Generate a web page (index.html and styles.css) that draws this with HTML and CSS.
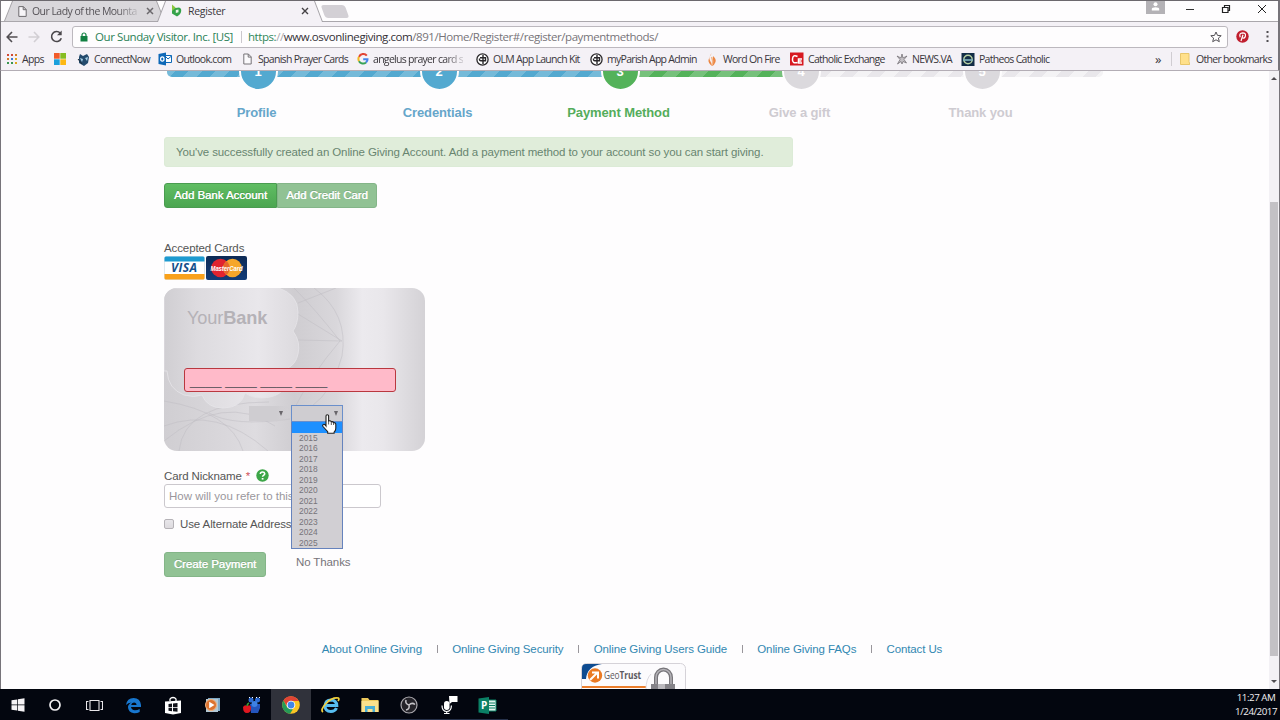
FILE: index.html
```html
<!DOCTYPE html>
<html lang="en">
<head>
    <meta charset="UTF-8">
    <meta name="viewport" content="width=device-width, initial-scale=1.0">
    <title>Register</title>
    <link rel="stylesheet" href="styles.css">
</head>
<body>
    <div class="window">
        <div class="tabstrip">
            <div class="tab tab-back">
                <svg width="9" height="11" viewBox="0 0 9 11"><path d="M.8.6h4.6l2.8 2.9v6.9H.8zM5.2.6v3.1h3" fill="#f7f5f8" stroke="#6d6a6e"/></svg>
                <span class="tab-title faded">Our Lady of the Mounta</span>
                <svg class="tab-close" width="8" height="8" viewBox="0 0 8 8"><path d="M1 1l6 6M7 1L1 7" stroke="#6b686c" stroke-width="1.5"/></svg>
            </div>
            <div class="tab tab-front">
                <svg width="11" height="13" viewBox="0 0 11 13"><path d="M1 .5l3.500 3v5L1 9z" fill="#8ac63f"/><path d="M1 7l3.500-3 3.500-.5q2.500.5 2.200 3.500Q10 10 6 12.500L1 9.500z" fill="#35a24a"/><path d="M4.800 6l2.700-.5v2.700l-2.700.8z" fill="#eaf6e6"/></svg>
                <span class="tab-title">Register</span>
                <svg class="tab-close" width="8" height="8" viewBox="0 0 8 8"><path d="M1 1l6 6M7 1L1 7" stroke="#444145" stroke-width="1.4"/></svg>
            </div>
            <div class="tab-new"></div>
            <div class="window-buttons">
                <div class="user-badge"><svg width="9" height="9" viewBox="0 0 9 9"><circle cx="4.500" cy="2.200" r="2" fill="#fff"/><path d="M.8 8.500V7q0-1.800 3.700-1.800T8.200 7v1.500z" fill="#fff"/></svg></div>
                <svg width="10" height="10" viewBox="0 0 10 10"><path d="M1 5.500h8" stroke="#333"/></svg>
                <svg width="10" height="10" viewBox="0 0 10 10"><path d="M1.500 3.500h5.500v5H1.500zM3.500 3V1.500h5v5H7.500" fill="none" stroke="#222" stroke-width="1.200"/></svg>
                <svg width="10" height="10" viewBox="0 0 10 10"><path d="M1 1l8 8M9 1L1 9" stroke="#222"/></svg>
            </div>
        </div>

        <div class="toolbar">
            <svg width="12" height="12" viewBox="0 0 12 12"><path d="M6 1L1.200 6 6 11M1.200 6H11.500" fill="none" stroke="#514e52" stroke-width="1.600"/></svg>
            <svg width="12" height="12" viewBox="0 0 12 12"><path d="M6 1l4.800 5L6 11M.5 6h10" fill="none" stroke="#d2cfd4" stroke-width="1.600"/></svg>
            <svg width="13" height="13" viewBox="0 0 13 13"><path d="M10.300 3.200A5 5 0 1 0 11.300 8.200" fill="none" stroke="#4b484c" stroke-width="1.600"/><path d="M11.700.6v4.700H7z" fill="#4b484c"/></svg>
            <div class="address-bar">
                <svg width="8" height="10" viewBox="0 0 8 10"><path d="M2 4.500V3a2 2 0 0 1 4 0v1.500" fill="none" stroke="#128042" stroke-width="1.200"/><path d="M.5 4h7v5.500h-7z" fill="#128042"/></svg>
                <span class="site-owner">Our Sunday Visitor. Inc. [US]</span>
                <span class="url"><i>https:</i><b>//</b>www.osvonlinegiving.com<em>/891/Home/Register#/register/paymentmethods/</em></span>
                <svg class="star" width="12" height="12" viewBox="0 0 12 12"><path d="M6 1l1.500 3.400 3.700.3-2.800 2.400.9 3.600L6 8.800l-3.300 1.900.9-3.600L.8 4.700l3.700-.3z" fill="none" stroke="#555257"/></svg>
            </div>
            <svg width="13" height="13" viewBox="0 0 13 13"><circle cx="6.500" cy="6.500" r="6.200" fill="#c01e2e"/><path d="M4.200 7.200Q2.700 3 6.700 2.800q3.300.2 2.700 3.200-.8 2.900-3 1.700M7 4.700L5 11" fill="none" stroke="#fff" stroke-width="1.200"/></svg>
            <svg class="menu-dots" width="3" height="11" viewBox="0 0 3 11"><path d="M.5 0h2v2h-2zM.5 4.500h2v2h-2zM.5 9h2v2h-2z" fill="#514e52"/></svg>
        </div>

        <div class="bookmarks">
            <div class="bookmark"><svg width="12" height="12" viewBox="0 0 12 12"><path d="M1 1h2v2H1zM5 1h2v2H5z" fill="#d14836"/><path d="M9 1h2v2H9zM1 5h2v2H1z" fill="#d37b28"/><path d="M5 5h2v2H5z" fill="#3b78d6"/><path d="M9 5h2v2H9zM9 9h2v2H9z" fill="#e0a51d"/><path d="M1 9h2v2H1zM5 9h2v2H5z" fill="#3a9650"/></svg><span>Apps</span></div>
            <div class="bookmark"><svg width="14" height="14" viewBox="0 0 14 14"><path d="M1 1h5.700v5.700H1z" fill="#f15a29"/><path d="M7.300 1H13v5.700H7.300z" fill="#85bd22"/><path d="M1 7.300h5.700V13H1z" fill="#1ba0dc"/><path d="M7.300 7.300H13V13H7.300z" fill="#fdb813"/></svg></div>
            <div class="bookmark"><svg width="13" height="13" viewBox="0 0 13 13"><path d="M2 4l1-3 3 2 4-2 2 3-1 6-4 3-5-3z" fill="#244b6d"/><path d="M3 5l3 1-1 3zM8 5l3-1-1 4z" fill="#a8d1e8"/><path d="M1 6l4 5" stroke="#182a38"/></svg><span>ConnectNow</span></div>
            <div class="bookmark"><svg width="14" height="14" viewBox="0 0 14 14"><path d="M7 3.500h6.500v7H7z" fill="#fff" stroke="#0d68b7"/><path d="M7 4l3 3 3.500-3" fill="none" stroke="#0d68b7"/><path d="M.5 2L8 .6v12.800L.5 12z" fill="#0d68b7"/><ellipse cx="4.300" cy="7" rx="1.700" ry="2.200" fill="none" stroke="#fff" stroke-width="1.200"/></svg><span>Outlook.com</span></div>
            <div class="bookmark"><svg width="12" height="12" viewBox="0 0 12 12"><path d="M1.800 1h4.600l2.800 2.900V11H1.800zM6.200 1v3.100h3" fill="#fbfafc" stroke="#777478"/></svg><span>Spanish Prayer Cards</span></div>
            <div class="bookmark"><svg width="12" height="12" viewBox="0 0 12 12"><g fill="none" stroke-width="2"><path d="M9.800 2.700A4.600 4.600 0 0 0 2 3.800" stroke="#e14434"/><path d="M2 3.800a4.600 4.600 0 0 0 0 4.400" stroke="#f3b923"/><path d="M2 8.200a4.600 4.600 0 0 0 7 1.300" stroke="#36a256"/><path d="M9 9.500Q10.600 8 10.500 6.200H6.200" stroke="#4483ea"/></g></svg><span class="faded">angelus prayer card s</span></div>
            <div class="bookmark"><svg width="13" height="13" viewBox="0 0 13 13"><circle cx="6.500" cy="6.500" r="5.600" fill="#fff" stroke="#29272a" stroke-width="1.300"/><path d="M7 2v9M4 4.800h6.200M9.500 5v2.700H5Q3 7.500 3.600 5.500" fill="none" stroke="#29272a" stroke-width="1.400"/></svg><span>OLM App Launch Kit</span></div>
            <div class="bookmark"><svg width="13" height="13" viewBox="0 0 13 13"><circle cx="6.500" cy="6.500" r="5.600" fill="#fff" stroke="#29272a" stroke-width="1.300"/><path d="M7 2v9M4 4.800h6.200M9.500 5v2.700H5Q3 7.500 3.600 5.500" fill="none" stroke="#29272a" stroke-width="1.400"/></svg><span>myParish App Admin</span></div>
            <div class="bookmark"><svg width="12" height="13" viewBox="0 0 12 13"><g transform="translate(1)"><path d="M4 0Q0 4 2 7.500T4 13q-4-3-3.500-6T4 0M5 3q3.500 3 2.500 6T4 13q1-4 1-10" fill="#ec8743"/><path d="M3.500 4q2 4 .8 8" fill="none" stroke="#f4b586" stroke-width="1.500"/></g></svg><span>Word On Fire</span></div>
            <div class="bookmark"><svg width="14" height="14" viewBox="0 0 14 14"><path d="M0 .5h13.500v13H0z" fill="#d71920"/><path d="M7.500 4.500Q3 2 2.500 7t5 3.500M12 7H8.500v4H12M8.500 9h3" fill="none" stroke="#fff" stroke-width="1.500"/></svg><span>Catholic Exchange</span></div>
            <div class="bookmark"><svg width="12" height="12" viewBox="0 0 12 12"><path d="M1 3l4 2 1-4 1 4 4-2-3 3.500 2.500 3.500L7 8.500 6 11 5 8.500 1.500 11 4 6.500z" fill="#c5c1c6" stroke="#777378" stroke-width=".8"/></svg><span>NEWS.VA</span></div>
            <div class="bookmark"><svg width="14" height="13" viewBox="0 0 14 13"><path d="M.5 0h13v13H.5z" fill="#132d46"/><circle cx="7" cy="6.500" r="4.200" fill="none" stroke="#b7d0a2" stroke-width="1.400"/><path d="M2 7h10" stroke="#82b5be" stroke-width="1.600"/></svg><span>Patheos Catholic</span></div>
            <div class="bookmark-more">»</div>
            <div class="bookmark bookmark-other"><svg width="10" height="12" viewBox="0 0 10 12"><path d="M.5.5H9v8l.8 3H.5z" fill="#ffe08a" stroke="#e8c66a"/></svg><span>Other bookmarks</span></div>
        </div>

        <div class="viewport">
            <div class="page">
                <div class="steps">
                    <div class="steps-bar"><div class="bar-done"></div><div class="bar-current"></div><div class="bar-todo"></div></div>
                    <div class="step done"><div class="step-number">1</div><div class="step-label">Profile</div></div>
                    <div class="step done"><div class="step-number">2</div><div class="step-label">Credentials</div></div>
                    <div class="step current"><div class="step-number">3</div><div class="step-label">Payment Method</div></div>
                    <div class="step"><div class="step-number">4</div><div class="step-label">Give a gift</div></div>
                    <div class="step"><div class="step-number">5</div><div class="step-label">Thank you</div></div>
                </div>

                <div class="alert">You've successfully created an Online Giving Account. Add a payment method to your account so you can start giving.</div>

                <div class="btn-group">
                    <button class="btn btn-active">Add Bank Account</button><button class="btn">Add Credit Card</button>
                </div>

                <div class="accepted">Accepted Cards</div>
                <div class="card-logos">
                    <svg width="41" height="24" viewBox="0 0 41 24"><rect x=".5" y=".5" width="40" height="23" rx="1.500" fill="#fff" stroke="#dfe8ee"/><path d="M.5 5.500V2Q.5.500 2 .5h37q1.500 0 1.500 1.500v3.500z" fill="#1d9ad0"/><path d="M.5 18h40v4q0 1.500-1.500 1.500H2Q.5 23.500.5 22z" fill="#f9a11b"/><text x="7" y="16" class="visa-text" textLength="26">VISA</text></svg>
                    <svg width="41" height="24" viewBox="0 0 41 24"><defs><linearGradient id="mc" x2="0" y2="1"><stop stop-color="#0d2a55"/><stop offset="1" stop-color="#123c78"/></linearGradient></defs><rect width="41" height="24" rx="2" fill="url(#mc)"/><circle cx="14.500" cy="12" r="9.300" fill="#e0242f"/><circle cx="26.500" cy="12" r="9.300" fill="#f6a62a"/><path d="M20.500 5a9.300 9.300 0 0 1 0 14 9.300 9.300 0 0 1 0-14" fill="#e5672c"/><text x="4.500" y="15" class="mc-text" textLength="32" lengthAdjust="spacingAndGlyphs">MasterCard</text></svg>
                </div>

                <div class="bank-card">
                    <svg class="card-pattern" width="261" height="163" viewBox="0 0 261 163">
                        <defs>
                            <linearGradient id="left"><stop stop-color="#d0ced2"/><stop offset=".25" stop-color="#dddbdf"/><stop offset=".7" stop-color="#e9e7eb"/><stop offset="1" stop-color="#dcdade"/></linearGradient>
                            <linearGradient id="base"><stop stop-color="#d0ced2"/><stop offset=".35" stop-color="#dedce0"/><stop offset=".5" stop-color="#cfcdd1"/><stop offset=".66" stop-color="#d9d7db"/><stop offset=".76" stop-color="#eceaee"/><stop offset=".84" stop-color="#e9e7eb"/><stop offset=".93" stop-color="#dddbdf"/><stop offset="1" stop-color="#d4d2d6"/></linearGradient>
                        </defs>
                        <path d="M0 0h261v163H0z" fill="url(#base)"/>
                        <g fill="none" stroke="#c0bec3" stroke-opacity=".5">
                            <path d="M130 0q22 22 46 53-30 35-48 72M150 0q35 26 28 68-9 35-30 50M134 15l38-15M134 52l44 1-44-27"/>
                            <path d="M0 138q53-20 104 25M0 153q60-49 111-15M0 113q67 11 79 50M15 163q5-49 90-49M45 125q24 14 81 6"/>
                        </g>
                        <path d="M0 0h115q19 7 19 24 0 12-5 19 8 11 5 23-2 10-10 14 3 29-26 30-10 0-17-5-4 15-22 15-16 0-21-13-8 3-18 0Q4 101 3 83H0z" fill="url(#left)" stroke="#e6e4e8" stroke-width=".8"/>
                    </svg>
                    <div class="bank-name">Your<b>Bank</b></div>
                    <div class="card-number">____ ____ ____ ____</div>
                    <div class="card-expiry">
                        <div class="select select-month"><i></i></div>
                        <div class="select select-year">
                            <i></i>
                            <div class="year-menu">
                                <div class="selected"></div>
                                <div>2015</div>
                                <div>2016</div>
                                <div>2017</div>
                                <div>2018</div>
                                <div>2019</div>
                                <div>2020</div>
                                <div>2021</div>
                                <div>2022</div>
                                <div>2023</div>
                                <div>2024</div>
                                <div>2025</div>
                            </div>
                            <svg class="cursor" width="15" height="20" viewBox="0 0 15 20"><path d="M4 11V2q0-1.300 1.300-1.300T6.600 2v5q2-.7 2.700.7 1.800-.4 2.300 1 2-.3 2.200 1.500v4q0 2.500-1.700 4v1H5.700v-1.500L1 12.500q-.9-1.500.5-2Q2.700 10 4 12z" fill="#fff" stroke="#222" stroke-width="1.100"/><path d="M6.600 7v3.500M9.300 8v3M11.600 9v2" stroke="#333" stroke-width=".8"/></svg>
                        </div>
                    </div>
                </div>

                <div class="field-label">Card Nickname <b>*</b>
                    <svg width="13" height="13" viewBox="0 0 13 13"><circle cx="6.500" cy="6.500" r="6.200" fill="#3da648"/><path d="M4.300 5Q4.500 3 6.500 3t2.200 1.700q0 1-1.200 1.700-.9.500-.9 1.400" fill="none" stroke="#fff" stroke-width="1.600"/><path d="M5.700 9h1.800v1.600H5.700z" fill="#fff"/></svg>
                </div>
                <input class="nickname" type="text" placeholder="How will you refer to this">
                <div class="alternate"><span class="checkbox"></span>Use Alternate Address</div>
                <div class="actions">
                    <button class="btn btn-create">Create Payment</button>
                    <a class="no-thanks">No Thanks</a>
                </div>

                <div class="footer">
                    <a>About Online Giving</a><i></i><a>Online Giving Security</a><i></i><a>Online Giving Users Guide</a><i></i><a>Online Giving FAQs</a><i></i><a>Contact Us</a>
                </div>
                <div class="seal">
                    <svg width="106" height="26" viewBox="0 0 106 26"><rect x=".5" y=".5" width="104" height="40" rx="5" fill="#fcfbfd" stroke="#d5d2d8"/><path d="M1 16V5q0-4 4-4h16Q6 3 5 16z" fill="#0e4c91"/><circle cx="14" cy="12.500" r="7.200" fill="#ea7a24"/><path d="M9 17l7-7M11 9.500h6v6" fill="none" stroke="#fff" stroke-width="2"/><path d="M1 24h64" stroke="#ec7f2d" stroke-width="2"/><path d="M65 26q0-10 5-15" fill="none" stroke="#dddae0"/><path d="M75 22v-7.500a7.500 8 0 0 1 15 0V22" fill="none" stroke="#77757a" stroke-width="4"/><path d="M75 22v-7.500a7.500 8 0 0 1 15 0V22" fill="none" stroke="#b5b3b8" stroke-width="1.500"/><path d="M70 21h24v5H70z" fill="#858389"/><path d="M77 21h7v5h-7z" fill="#bbb9be"/><text x="23" y="16" class="seal-text" textLength="37" lengthAdjust="spacingAndGlyphs">Geo<tspan font-weight="bold">Trust</tspan></text></svg>
                </div>
            </div>
            <div class="scrollbar">
                <span class="arrow-up"></span>
                <span class="thumb"></span>
                <span class="arrow-down"></span>
            </div>
        </div>

        <div class="taskbar">
            <div class="task"><svg width="14" height="14" viewBox="0 0 14 14"><path d="M.5 2.200l5.700-.8v5.200H.5zM6.900 1.300l6.600-1v6.300H6.900zM.5 7.300h5.700v5.200l-5.700-.8zM6.900 7.300h6.600v6.400l-6.600-1z" fill="#f5f3f6"/></svg></div>
            <div class="task"><svg width="14" height="14" viewBox="0 0 14 14"><circle cx="7" cy="7" r="5" fill="none" stroke="#f0eef1" stroke-width="1.700"/></svg></div>
            <div class="task"><svg width="17" height="13" viewBox="0 0 17 13"><path d="M4 1.500h9v10H4zM2.500 2.500h-2v8h2M14.500 2.500h2v8h-2" fill="none" stroke="#e8e6e9" stroke-width="1.100"/></svg></div>
            <div class="task"><svg width="17" height="17" viewBox="0 0 17 17"><path d="M1 8Q2 1 8.600 1T16 8v2H6q.4 3 4 3.200 2.500 0 4.700-1.300v3Q12 16.500 9 16.300 3 15.500 3 10q.3-3 3.600-4.500Q3 5.500 1 8m5.200-.1h5.300q0-2.500-2.500-2.500-2.500.2-2.800 2.500" fill="#1877cf"/></svg></div>
            <div class="task"><svg width="18" height="19" viewBox="0 0 18 19"><path d="M1 5.500l16-1V17l-8 1.500L1 17z" fill="#fff"/><path d="M6 5V3Q7 1.500 9 1.500T12 3v2" fill="none" stroke="#fff" stroke-width="1.300"/><path d="M4.500 8l3.500-.4v3.300H4.500zM9 7.500l4.500-.5v3.900H9zM4.500 11.800H8v3.400l-3.500-.4zM9 11.800h4.500v4L9 15.300z" fill="#11131b"/></svg></div>
            <div class="task"><svg width="17" height="16" viewBox="0 0 17 16"><path d="M4 1h12v13H4z" fill="#7fa9c6"/><path d="M2 2h12v13H2z" fill="#b3c8d4"/><circle cx="7" cy="8" r="5.500" fill="#dc7330" stroke="#f0b17e"/><path d="M5.200 4.800L10.500 8l-5.300 3.200z" fill="#fff"/></svg></div>
            <div class="task"><svg width="19" height="18" viewBox="0 0 19 18"><path d="M8 8h10v4l-2 5H9z" fill="#2455bd"/><circle cx="9" cy="4" r="2.500" fill="#2d6bd2"/><circle cx="15.500" cy="4" r="2.500" fill="#2d6bd2"/><circle cx="12.500" cy="8" r="3" fill="#3e82e4"/><path d="M7 1l1 1M10 1l1 1M14 1l1 1M17 1l1 1" stroke="#fff"/><path d="M1 11q2-3 4-1 4-2 4 2 0 5-4 5-4 0-4-6" fill="#df1720"/><path d="M5 10q0-2 2-3" stroke="#3b9b36" stroke-width="1.500"/></svg></div>
            <div class="task task-active"><svg width="18" height="18" viewBox="0 0 18 18"><circle cx="9" cy="9" r="8.800" fill="#fbc524"/><path d="M1.400 4.600A8.800 8.800 0 0 1 16.700 5H9L5.500 11z" fill="#df4435"/><path d="M1.400 4.600l3.900 7 5.500 2L8 17.800A8.800 8.800 0 0 1 1.400 4.600" fill="#259a58"/><circle cx="9" cy="9" r="4.300" fill="#fff"/><circle cx="9" cy="9" r="3.400" fill="#4285e8"/></svg></div>
            <div class="task"><svg width="19" height="18" viewBox="0 0 19 18"><path d="M15.500 12Q14 15.500 9.800 15.500 4.200 15.500 4 9.700 4.500 4 10 4q5.500.3 5.800 5.500H5" fill="none" stroke="#57bdf0" stroke-width="3"/><path d="M2 16Q-1 14 5 7.500T17.500 2q1 1-.5 3" fill="none" stroke="#f3d13c" stroke-width="1.700"/></svg></div>
            <div class="task task-open"><svg width="18" height="16" viewBox="0 0 18 16"><path d="M.5 1H7l1.500 2h9v12H.5z" fill="#edc85c"/><path d="M.5 4h17v11H.5z" fill="#fbe08c"/><path d="M4 15V9h10v6h-2.500v-3h-5v3z" fill="#4aaed5"/></svg></div>
            <div class="task task-open"><svg width="18" height="18" viewBox="0 0 18 18"><circle cx="9" cy="9" r="8" fill="#242329" stroke="#aaa8ad" stroke-width="1.200"/><g fill="none" stroke="#c7c5ca" stroke-width="1.500"><path d="M9 9Q5 8 6 4"/><path d="M9 9q3-3 6-.5"/><path d="M9 9q1 4-3 5"/></g></svg></div>
            <div class="task task-open"><svg width="18" height="18" viewBox="0 0 18 18"><path d="M9 0h8.500v6H12L9.500 8z" fill="#fff"/><rect x="4" y="5" width="5.500" height="9" rx="2.700" fill="#fff"/><path d="M2 9.500q0 6 4.700 6t4.700-6M6.700 15v3M4 17.500h5.500" fill="none" stroke="#fff" stroke-width="1.200"/></svg></div>
            <div class="task task-open"><svg width="19" height="17" viewBox="0 0 19 17"><path d="M10 3h8v11h-8z" fill="#e3f3ed" stroke="#0b8065"/><path d="M11 6h6M11 8.500h6M11 11h6" stroke="#0b8065"/><path d="M.5 1.500L11 0v17L.5 15.500z" fill="#0b8065"/><text x="3" y="12" class="pub-text">P</text></svg></div>
            <div class="clock"><span>11:27 AM</span><span>1/24/2017</span></div>
        </div>
    </div>
</body>
</html>
```
FILE: styles.css
```css
* {
    margin: 0;
    padding: 0;
    box-sizing: border-box;
}

body {
    font-family: "Liberation Sans", Arial, sans-serif;
    background: #fefdfe;
    overflow: hidden;
}

svg {
    display: block;
    flex: none;
}

i, em {
    font-style: normal;
}

.window {
    width: 1280px;
    height: 720px;
    display: flex;
    flex-direction: column;
    font-size: 11.5px;
    color: #555;
}

/* browser chrome */
.tabstrip,
.toolbar,
.bookmarks {
    font-family: "Open Sans", "Noto Sans", sans-serif;
    border-left: 1px solid #77747a;
    border-right: 2px solid #77747a;
    white-space: nowrap;
}

.tabstrip {
    height: 22px;
    display: flex;
    border-top: 1px solid #6c696e;
    background: linear-gradient(#fefdfe 20px, #aaa7ac 20px);
    padding-left: 3px;
}

.tab {
    display: flex;
    align-items: center;
    position: relative;
    height: 21px;
    padding: 0 10px 2px 14px;
    font-size: 10.5px;
    color: #555257;
}

.tab::before,
.tab::after {
    content: "";
    position: absolute;
    inset: 0;
    background: #a5a2a7;
    clip-path: polygon(0 100%, 8px 0, calc(100% - 8px) 0, 100% 100%);
    z-index: -2;
}

.tab::after {
    inset: 0 1px;
    background: #d9d7db;
    z-index: -1;
}

.tabstrip,
.tab {
    isolation: isolate;
}

.tab-back {
    width: 161px;
    height: 20px;
    padding: 0 11px 0 14px;
}

.tab-front {
    width: 166px;
    margin-left: -8px;
    color: #39363b;
}

.tab-front::after {
    background: #f4f1f6;
}

.tab-title {
    margin-left: 6px;
    letter-spacing: -0.3px;
}

.tab-back .tab-title {
    margin-left: 5px;
    letter-spacing: -0.55px;
}

.faded {
    -webkit-mask-image: linear-gradient(90deg, #000 80%, transparent 105%);
    mask-image: linear-gradient(90deg, #000 80%, transparent 105%);
}

.tab-close {
    margin-left: auto;
}

.tab-front .tab-close {
    margin-right: 4px;
}

.tab-new {
    width: 24px;
    height: 13px;
    margin: 4px 0 0 0;
    background: #d3d0d5;
    border-radius: 3px;
    transform: skewX(20deg);
}

.window-buttons {
    display: flex;
    align-items: center;
    margin-left: auto;
    gap: 26px;
    padding: 0 11px 5px 0;
}

.user-badge {
    width: 19px;
    height: 13px;
    margin: -4px -6px 0 0;
    padding: 1px 5px;
    background: #b4b2b6;
}

.toolbar {
    height: 26px;
    display: flex;
    align-items: center;
    padding: 3px 9px 0 5px;
    gap: 10px;
    background: #f4f1f6;
}

.address-bar {
    flex: 1;
    height: 22px;
    display: flex;
    align-items: center;
    padding: 0 5px 0 7px;
    border: 1px solid #bcb8be;
    border-radius: 3px;
    background: #fefdfe;
    font-size: 11.5px;
    margin-left: -1px;
    margin-right: -2px;
}

.site-owner {
    width: 147px;
    height: 12px;
    line-height: 12px;
    margin: 0 6px 0 7px;
    border-right: 1px solid #cbc8cd;
    color: #2a8156;
    letter-spacing: -0.42px;
}

.url {
    color: #343137;
    letter-spacing: -0.43px;
}

.url i {
    color: #31875a;
}

.url b {
    font-weight: normal;
    color: #aaa7ac;
}

.url em {
    color: #777479;
}

.star {
    margin-left: auto;
}

.menu-dots {
    margin-left: 7px;
}

.bookmarks {
    height: 23px;
    display: grid;
    grid-template-columns: 47px 24px 81px 84px 115px 119px 114px 117px 83px 106px 65px 194px 16px 1fr;
    align-items: center;
    padding-left: 5px;
    background: #f4f1f6;
    border-bottom: 1px solid #b3adb5;
    font-size: 10.5px;
    letter-spacing: -0.7px;
    color: #39363b;
}

.bookmark {
    display: flex;
    align-items: center;
    gap: 4px;
}

.bookmark span {
    flex: none;
}

.bookmark-other {
    height: 14px;
    padding-left: 8px;
    gap: 6px;
    border-left: 1px solid #d0cdd2;
}

.bookmark-more {
    font-size: 13px;
    line-height: 14px;
}

/* page */
.viewport {
    height: 618px;
    display: flex;
    overflow: hidden;
    border-left: 1px solid #77747a;
    border-right: 1px solid #77747a;
    letter-spacing: -0.11px;
}

.page {
    flex: 1;
    padding: 0 0 0 163px;
}

.steps {
    display: grid;
    grid-template-columns: repeat(5, 181px);
    width: 940px;
    margin-top: -17px;
    padding-left: 2px;
    height: 83px;
    position: relative;
}

/* the striped track runs behind the numbers */
.steps-bar {
    position: absolute;
    left: 3px;
    top: 12px;
    width: 936px;
    height: 11px;
    display: flex;
    border-radius: 5px;
    overflow: hidden;
    background-color: #fff;
}

.bar-done,
.bar-current,
.bar-todo {
    background-image: linear-gradient(135deg, rgba(255, 255, 255, 0.2) 25%, transparent 25%, transparent 50%, rgba(255, 255, 255, 0.2) 50%, rgba(255, 255, 255, 0.2) 75%, transparent 75%);
    background-size: 27px 27px;
}

.bar-done {
    width: 452px;
    background-color: #53a9d0;
}

.bar-current {
    width: 164px;
    background-color: #54b25a;
}

.bar-todo {
    flex: 1;
    background-color: #e9e7eb;
    background-image: linear-gradient(135deg, rgba(255, 255, 255, 0.5) 25%, transparent 25%, transparent 50%, rgba(255, 255, 255, 0.5) 50%, rgba(255, 255, 255, 0.5) 75%, transparent 75%);
}

.step {
    position: relative;
    display: flex;
    flex-direction: column;
    align-items: center;
    color: #cecbd1;
}

.step-number {
    width: 39px;
    height: 39px;
    margin: -2px 0 0 3px;
    border: 2px solid #fefdfe;
    border-radius: 50%;
    background: #dbd9dd;
    color: #fff;
    font-size: 13px;
    font-weight: bold;
    line-height: 36px;
    text-align: center;
}

.step-label {
    margin-top: 13px;
    font-size: 13px;
    font-weight: bold;
    line-height: 17px;
}

.done {
    color: #66a6ca;
}

.done .step-number {
    background: #53a9d0;
}

.current {
    color: #54ad5b;
}

.current .step-number {
    background: #54b25a;
}

.alert {
    width: 629px;
    height: 30px;
    padding-left: 11px;
    border: 1px solid #dcebd7;
    border-radius: 3px;
    background: #e0edda;
    color: #688570;
    line-height: 29px;
    white-space: nowrap;
    font-size: 11.5px;
}

.btn-group {
    display: flex;
    margin-top: 16px;
}

.btn {
    height: 25px;
    width: 100px;
    padding-bottom: 1px;
    border: 1px solid #84b588;
    border-radius: 0 3px 3px 0;
    background: #91c294;
    color: #fff;
    font-family: inherit;
    font-size: 11.4px;
    text-shadow: 0 -1px 0 rgba(0, 0, 0, 0.15), 0.3px 0 0 #fff;
}

.btn-active {
    width: 113px;
    border-color: #4a9c50;
    border-radius: 3px 0 0 3px;
    background: linear-gradient(#60bd63, #4ca651);
}

.accepted {
    margin-top: 33px;
    line-height: 14px;
}

.card-logos {
    display: flex;
    gap: 1px;
    margin-top: 1px;
}

.visa-text {
    font: italic bold 12px "Open Sans", sans-serif;
    fill: #134f8b;
}

.mc-text {
    font: italic bold 7.5px "Liberation Sans", sans-serif;
    fill: #fff;
}

.bank-card {
    position: relative;
    width: 261px;
    height: 163px;
    margin-top: 8px;
    padding: 18px 20px 0;
}

.card-pattern {
    position: absolute;
    left: 0;
    top: 0;
    border-radius: 13px;
}

.bank-name {
    position: relative;
    height: 62px;
    padding-left: 3px;
    font-size: 18.2px;
    line-height: 24px;
    color: #b5b2b7;
}

.card-number {
    position: relative;
    width: 212px;
    height: 24px;
    padding-left: 5px;
    border: 1px solid #b9383f;
    border-radius: 3px;
    background: #ffbac9;
    color: #6d6068;
    font-size: 14.3px;
    line-height: 23px;
}

.card-expiry {
    position: relative;
    display: flex;
    gap: 1px;
    margin: 13px 0 0 64px;
}

.select {
    position: relative;
    width: 42px;
    height: 17px;
    border: 1px solid transparent;
    background: linear-gradient(90deg, #cfcdd1 70%, transparent) content-box;
}

.select i {
    position: absolute;
    right: 6px;
    top: 5px;
    border: 2.5px solid transparent;
    border-top: 5px solid #69666b;
    border-bottom: 0;
}

.select-year {
    width: 52px;
    border-color: #6a8fcb;
    background: #cfcdd1;
}

.select-year i {
    right: 4px;
}

.year-menu {
    position: absolute;
    left: -1px;
    top: 16px;
    width: 52px;
    height: 127px;
    border: 1px solid #6683bd;
    border-top: 0;
    background: #d1cfd3;
    color: #77747a;
    font-size: 8.4px;
    line-height: 10.45px;
    padding-left: 7px;
    letter-spacing: 0;
}

.year-menu .selected {
    height: 11px;
    margin-left: -7px;
    background: #1e90ff;
}

.cursor {
    position: absolute;
    left: 30px;
    top: 8px;
}

.field-label {
    display: flex;
    align-items: center;
    gap: 4px;
    height: 15px;
    margin-top: 17px;
}

.field-label b {
    color: #d0525a;
    font-weight: normal;
}

.field-label svg {
    margin-left: 2px;
}

.nickname {
    display: block;
    width: 217px;
    height: 24px;
    margin-top: 1px;
    padding-left: 4px;
    border: 1px solid #cbc8cd;
    border-radius: 3px;
    background: #fff;
    font-family: inherit;
    font-size: 11.5px;
}

.nickname::placeholder {
    color: #9a979c;
}

.alternate {
    display: flex;
    align-items: center;
    gap: 6px;
    height: 16px;
    margin-top: 8px;
}

.checkbox {
    width: 10px;
    height: 10px;
    border: 1px solid #b5b2b7;
    border-radius: 2px;
    background: linear-gradient(#e8e6ea, #dddade);
}

.actions {
    display: flex;
    margin-top: 20px;
}

.btn-create {
    width: 102px;
    border-radius: 3px;
}

.no-thanks {
    margin: 4px 0 0 30px;
    color: #77747a;
}

.footer {
    display: flex;
    align-items: center;
    justify-content: center;
    gap: 14.6px;
    width: 936px;
    height: 14px;
    margin-top: 65px;
    color: #3288b2;
    white-space: nowrap;
}

.footer i {
    width: 1px;
    height: 8px;
    background: #99969b;
}

.seal {
    width: 936px;
    padding-left: 417px;
    margin-top: 7px;
}

.seal-text {
    font: 11px "Open Sans", sans-serif;
    fill: #5c5a60;
}

.scrollbar {
    width: 10px;
    display: flex;
    flex-direction: column;
    align-items: center;
    padding: 6px 0 4px;
    background: #f3f1f5;
}

.thumb {
    width: 8px;
    height: 454px;
    margin: 122px 0 24px;
    background: #c3c1c5;
}

.arrow-up,
.arrow-down {
    border: 3px solid transparent;
    border-top: 0;
    border-bottom: 3px solid #4f4c51;
}

.arrow-down {
    border-top: 3px solid #4f4c51;
    border-bottom: 0;
}

/* taskbar */
.taskbar {
    height: 31px;
    display: flex;
    background: #03060f;
    color: #f0eef1;
}

.task {
    width: 39.4px;
    height: 31px;
    display: flex;
    align-items: center;
    justify-content: center;
    padding-top: 1px;
}

.task:first-child {
    width: 35px;
}

.task-active {
    background: #30323b;
}

.task-open {
    box-shadow: inset 0 -1px #26314a;
}

.pub-text {
    font: bold 10px "Open Sans", sans-serif;
    fill: #fff;
}

.clock {
    display: flex;
    flex-direction: column;
    align-items: center;
    margin-left: auto;
    padding: 2px 3px 0 0;
    font: 9.8px/14px "Open Sans", sans-serif;
    letter-spacing: -0.5px;
}
```
